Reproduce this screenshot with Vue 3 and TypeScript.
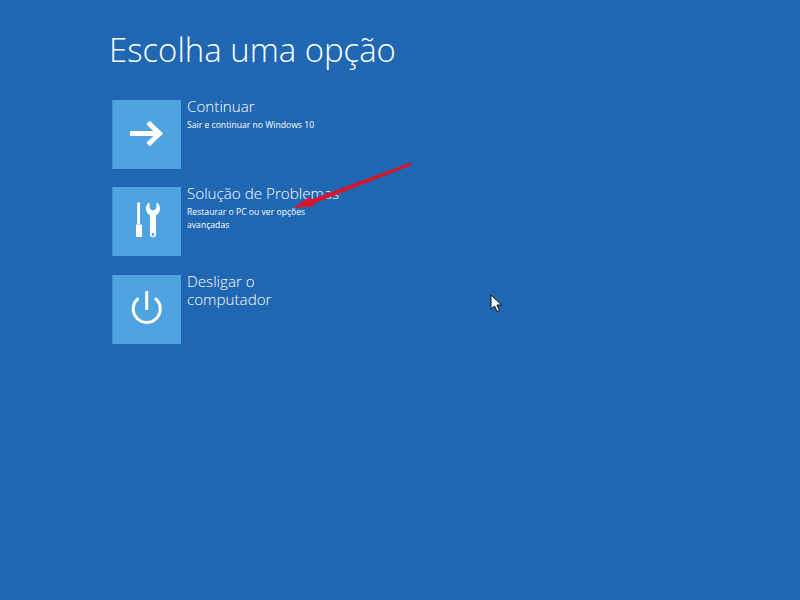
<script setup lang="ts">
interface Option { id: string; title: string; desc: string }
const options: Option[] = [
  { id: 'arrow', title: 'Continuar', desc: 'Sair e continuar no Windows 10' },
  { id: 'tools', title: 'Solução de Problemas', desc: 'Restaurar o PC ou ver opções avançadas' },
  { id: 'power', title: 'Desligar o computador', desc: '' },
]
</script>

<template>
  <main class="screen">
    <h1 class="heading">Escolha uma opção</h1>
    <ul class="options">
      <li v-for="o in options" :key="o.id" class="option">
        <div class="tile">
          <svg v-if="o.id === 'arrow'" width="69" height="69" viewBox="0 0 69 69">
            <path d="M18 33.500H46M36 22.500L47.500 33.500L36 44.500" fill="none" stroke="#fff" stroke-width="5" />
          </svg>
          <svg v-else-if="o.id === 'tools'" width="69" height="69" viewBox="0 0 69 69">
            <path d="M25.200 15.500h2.800v22h-2.800z" fill="#fff" />
            <path d="M24 37.500h6v11.500a1 1 0 0 1-1 1h-4a1 1 0 0 1-1-1z" fill="#fff" />
            <path fill-rule="evenodd" fill="#fff" d="M37.500 15.500v5c0 1.500 2 2.800 3.500 2.800s3.500-1.300 3.500-2.800v-5c2.300 1.100 3.500 3.400 3.500 6 0 3.200-1.700 5.600-4 6.800V48c0 1.300-1.300 2.300-3 2.300s-3-1-3-2.300V28.300c-2.300-1.200-4-3.600-4-6.800 0-2.600 1.200-4.900 3.500-6z M41 46a1.500 1.500 0 1 0 0.010 0z" />
          </svg>
          <svg v-else width="69" height="69" viewBox="0 0 69 69">
            <path d="M26.500 23.200A13.500 13.500 0 1 0 43 23.200" fill="none" stroke="#fff" stroke-width="3" />
            <path d="M34.700 16v19" stroke="#fff" stroke-width="3" />
          </svg>
        </div>
        <div class="text">
          <h2 class="title">{{ o.title }}</h2>
          <p v-if="o.desc" class="desc">{{ o.desc }}</p>
        </div>
      </li>
    </ul>
    <svg class="annotation" width="800" height="600" viewBox="0 0 800 600">
      <path d="M410.500 162.500L412 165L309 205.500L307 201Z" fill="#d5152b" />
      <path d="M293 208L310 196.500L314 206.500Z" fill="#d5152b" />
    </svg>
    <svg class="cursor" width="14" height="20" viewBox="0 0 14 20">
      <path d="M1 1V15L4.500 12L7 17.500L9.500 16.500L7 11H11.500Z" fill="#fff" stroke="#111" stroke-width="1" />
    </svg>
  </main>
</template>

<style>
html, body { margin: 0; }
</style>

<style scoped>
.screen {
  position: relative;
  width: 800px;
  height: 600px;
  box-sizing: border-box;
  padding: 28px 0 0 110px;
  background: #1f66b3;
  color: #fff;
  font-family: "Open Sans", "Noto Sans", sans-serif;
  overflow: hidden;
}
.heading {
  margin: 0 0 0 -1px;
  font-size: 32.900px;
  line-height: 44px;
  font-weight: 300;
}
.options {
  list-style: none;
  margin: 28px 0 0 2px;
  padding: 0;
  display: flex;
  flex-direction: column;
  gap: 18.400px;
}
.option {
  display: flex;
  gap: 6px;
  height: 69px;
}
.tile {
  width: 69px;
  height: 69px;
  flex: none;
  background: #4fa3e0;
  box-shadow: inset 1px 0 0 #3f94d6;
}
.tile svg { display: block; }
.text { width: 154px; margin-top: -3px; }
.title {
  margin: 0;
  font-size: 15.200px;
  line-height: 18px;
  font-weight: 300;
}
.desc {
  margin: 4px 0 0;
  font-size: 8.650px;
  line-height: 12.500px;
  font-weight: 400;
}
.annotation { position: absolute; left: 0; top: 0; }
.cursor { position: absolute; left: 490px; top: 294px; }
</style>
